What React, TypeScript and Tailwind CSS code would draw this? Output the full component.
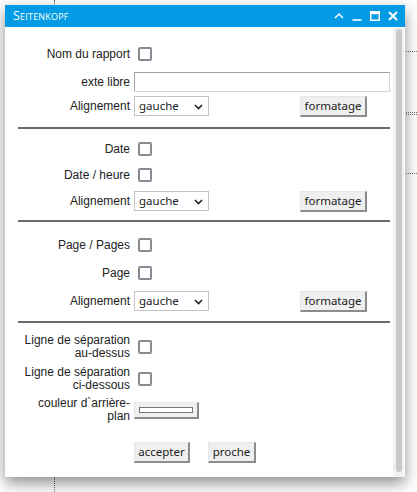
import React from "react";

const LBL = "w-[112px] shrink-0 text-right text-[12px] leading-[13px] text-[#222] font-['Liberation_Sans',Arial,sans-serif]";
const CTRL_FONT = "font-['Noto_Sans','Open_Sans',sans-serif] text-[11.5px] text-[#222]";

function Check() {
  return <div className="ml-[8px] w-[14px] h-[14px] border-2 border-[#8a8a93] rounded-[2px] bg-white" />;
}

function Btn({ children, className = "" }: { children: React.ReactNode; className?: string }) {
  return (
    <button
      className={`h-[21px] px-0 bg-[#efefef] border border-[#e6e6e6] border-r-2 border-b-2 border-r-[#8c8c8c] border-b-[#8c8c8c] leading-none flex items-center justify-center ${CTRL_FONT} ${className}`}
    >
      {children}
    </button>
  );
}

function CheckRow({ label, className = "" }: { label: React.ReactNode; className?: string }) {
  return (
    <div className={`flex items-center h-[20px] ${className}`}>
      <div className={LBL}>{label}</div>
      <Check />
    </div>
  );
}

function AlignRow({ className = "" }: { className?: string }) {
  return (
    <div className={`flex items-center h-[20px] ${className}`}>
      <div className={LBL}>Alignement</div>
      <div className={`ml-[4px] relative w-[75px] h-[20px] border border-[#c4c4c4] bg-white flex items-center pl-[4px] ${CTRL_FONT}`}>
        gauche
        <svg className="absolute right-[5px] top-[7px]" width="9" height="6" viewBox="0 0 9 6">
          <path d="M1 1 L4.5 4.5 L8 1" stroke="#222" strokeWidth="1.6" fill="none" />
        </svg>
      </div>
      <div className="ml-[91px]">
        <Btn className="w-[67px]">formatage</Btn>
      </div>
    </div>
  );
}

function Hr({ className = "" }: { className?: string }) {
  return <div className={`h-[2px] bg-[#6a6a6a] ${className}`} />;
}

export default function App() {
  return (
    <div className="relative w-[417px] h-[492px] bg-white overflow-hidden">
      {/* background canvas dotted guides */}
      <div className="absolute left-[54px] top-0 h-full border-l border-dotted border-[#666]" />
      <div className="absolute left-[380px] right-0 top-[51px] border-t border-dotted border-[#777]" />
      <div className="absolute left-[380px] right-0 top-[112px] border-t border-dotted border-[#777]" />
      <div className="absolute left-[380px] right-0 top-[114px] border-t border-dotted border-[#777]" />
      <div className="absolute left-[380px] right-0 top-[173px] border-t border-dotted border-[#777]" />

      {/* window */}
      <div className="absolute left-[5px] top-[5px] w-[400px] h-[472px] bg-white flex flex-col shadow-[0_6px_14px_rgba(0,0,0,0.45)]">
        <div className="h-[22px] shrink-0 bg-[#039be5] flex items-center justify-between pl-[8px] pr-[7px]">
          <span className="text-white text-[12.5px] font-['Open_Sans',sans-serif] [font-variant:small-caps] tracking-[0.2px]">
            Seitenkopf
          </span>
          <div className="flex items-center gap-[8px]">
            <svg width="10" height="10" viewBox="0 0 10 10">
              <path d="M1 7 L5 3 L9 7" stroke="white" strokeWidth="1.4" fill="none" />
            </svg>
            <svg width="10" height="10" viewBox="0 0 10 10">
              <path d="M0.5 9 H9.5" stroke="white" strokeWidth="1.6" fill="none" />
            </svg>
            <svg width="10" height="10" viewBox="0 0 10 10">
              <rect x="0.75" y="0.75" width="8.5" height="8.5" stroke="white" strokeWidth="1.5" fill="none" />
              <rect x="0.75" y="0.75" width="8.5" height="2.5" fill="white" />
            </svg>
            <svg width="10" height="10" viewBox="0 0 10 10">
              <path d="M1 1 L9 9 M9 1 L1 9" stroke="white" strokeWidth="2" fill="none" />
            </svg>
          </div>
        </div>

        <div className="flex flex-1 min-h-0">
          <div className="flex-1 pl-[13px] pr-[3px] flex flex-col">
            <CheckRow label="Nom du rapport" className="mt-[17px]" />
            <div className="flex items-center h-[20px] mt-[8px]">
              <div className={LBL}>exte libre</div>
              <input className="ml-[4px] flex-1 h-[20px] border border-[#d4d4d4] border-t-[#a0a0a0] border-l-[#a8a8a8] outline-none" />
            </div>
            <AlignRow className="mt-[4px]" />
            <Hr className="mt-[11px]" />

            <CheckRow label="Date" className="mt-[10px]" />
            <CheckRow label="Date / heure" className="mt-[6px]" />
            <AlignRow className="mt-[6px]" />
            <Hr className="mt-[9px]" />

            <CheckRow label="Page / Pages" className="mt-[13px]" />
            <CheckRow label="Page" className="mt-[8px]" />
            <AlignRow className="mt-[8px]" />
            <Hr className="mt-[10px]" />

            <div className="flex items-center h-[26px] mt-[11px]">
              <div className={LBL}>Ligne de séparation<br />au-dessus</div>
              <Check />
            </div>
            <div className="flex items-center h-[26px] mt-[6px]">
              <div className={LBL}>Ligne de séparation<br />ci-dessous</div>
              <Check />
            </div>
            <div className="flex items-center h-[26px] mt-[5px]">
              <div className={LBL}>couleur d`arrière-<br />plan</div>
              <button className="ml-[4px] w-[65px] h-[17px] bg-[#efefef] border border-[#e6e6e6] border-r-2 border-b-2 border-r-[#8c8c8c] border-b-[#8c8c8c] flex items-center justify-center">
                <div className="w-[54px] h-[6px] bg-white border border-[#777]" />
              </button>
            </div>

            <div className="flex items-center mt-[19px] pl-[116px] gap-[18px]">
              <Btn className="w-[56px]">accepter</Btn>
              <Btn className="w-[48px]">proche</Btn>
            </div>
          </div>

          <div className="w-[11px] mr-[1px] shrink-0 bg-[#f1f1f1] pt-[2px] pb-[5px] flex justify-end pr-[2px]">
            <div className="w-[6px] h-full rounded-[3px] bg-[#c9c9c9]" />
          </div>
        </div>
      </div>
    </div>
  );
}
